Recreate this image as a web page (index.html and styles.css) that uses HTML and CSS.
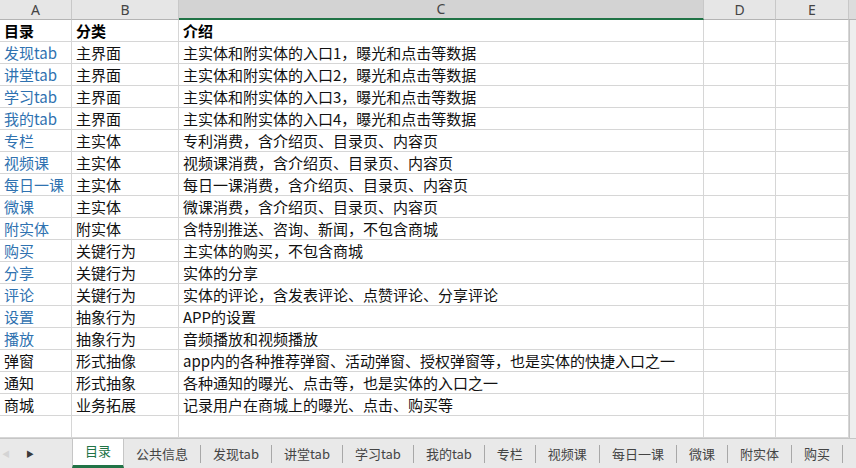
FILE: index.html
```html
<!DOCTYPE html>
<html lang="zh-CN">
<head>
<meta charset="utf-8">
<title>目录</title>
<link rel="stylesheet" href="styles.css">
</head>
<body>
<div class="app">
  <div class="sheet">
    <div class="hd">A</div><div class="hd">B</div><div class="hd sel">C</div><div class="hd">D</div><div class="hd">E</div><div class="hd edge"></div>

    <div class="c b">目录</div><div class="c b">分类</div><div class="c b">介绍</div><div class="c"></div><div class="c"></div><div class="c edge"></div>
    <div class="c link">发现tab</div><div class="c">主界面</div><div class="c">主实体和附实体的入口1，曝光和点击等数据</div><div class="c"></div><div class="c"></div><div class="c edge"></div>
    <div class="c link">讲堂tab</div><div class="c">主界面</div><div class="c">主实体和附实体的入口2，曝光和点击等数据</div><div class="c"></div><div class="c"></div><div class="c edge"></div>
    <div class="c link">学习tab</div><div class="c">主界面</div><div class="c">主实体和附实体的入口3，曝光和点击等数据</div><div class="c"></div><div class="c"></div><div class="c edge"></div>
    <div class="c link">我的tab</div><div class="c">主界面</div><div class="c">主实体和附实体的入口4，曝光和点击等数据</div><div class="c"></div><div class="c"></div><div class="c edge"></div>
    <div class="c link">专栏</div><div class="c">主实体</div><div class="c">专利消费，含介绍页、目录页、内容页</div><div class="c"></div><div class="c"></div><div class="c edge"></div>
    <div class="c link">视频课</div><div class="c">主实体</div><div class="c">视频课消费，含介绍页、目录页、内容页</div><div class="c"></div><div class="c"></div><div class="c edge"></div>
    <div class="c link">每日一课</div><div class="c">主实体</div><div class="c">每日一课消费，含介绍页、目录页、内容页</div><div class="c"></div><div class="c"></div><div class="c edge"></div>
    <div class="c link">微课</div><div class="c">主实体</div><div class="c">微课消费，含介绍页、目录页、内容页</div><div class="c"></div><div class="c"></div><div class="c edge"></div>
    <div class="c link">附实体</div><div class="c">附实体</div><div class="c">含特别推送、咨询、新闻，不包含商城</div><div class="c"></div><div class="c"></div><div class="c edge"></div>
    <div class="c link">购买</div><div class="c">关键行为</div><div class="c">主实体的购买，不包含商城</div><div class="c"></div><div class="c"></div><div class="c edge"></div>
    <div class="c link">分享</div><div class="c">关键行为</div><div class="c">实体的分享</div><div class="c"></div><div class="c"></div><div class="c edge"></div>
    <div class="c link">评论</div><div class="c">关键行为</div><div class="c">实体的评论，含发表评论、点赞评论、分享评论</div><div class="c"></div><div class="c"></div><div class="c edge"></div>
    <div class="c link">设置</div><div class="c">抽象行为</div><div class="c">APP的设置</div><div class="c"></div><div class="c"></div><div class="c edge"></div>
    <div class="c link">播放</div><div class="c">抽象行为</div><div class="c">音频播放和视频播放</div><div class="c"></div><div class="c"></div><div class="c edge"></div>
    <div class="c">弹窗</div><div class="c">形式抽像</div><div class="c">app内的各种推荐弹窗、活动弹窗、授权弹窗等，也是实体的快捷入口之一</div><div class="c"></div><div class="c"></div><div class="c edge"></div>
    <div class="c">通知</div><div class="c">形式抽象</div><div class="c">各种通知的曝光、点击等，也是实体的入口之一</div><div class="c"></div><div class="c"></div><div class="c edge"></div>
    <div class="c">商城</div><div class="c">业务拓展</div><div class="c">记录用户在商城上的曝光、点击、购买等</div><div class="c"></div><div class="c"></div><div class="c edge"></div>
    <div class="c"></div><div class="c"></div><div class="c"></div><div class="c"></div><div class="c"></div><div class="c edge"></div>
  </div>
  <div class="tabbar">
    <div class="nav"><span class="prev">&#9664;</span><span class="next">&#9654;</span></div>
    <div class="tab active">目录</div>
    <div class="tab">公共信息</div>
    <div class="tab">发现tab</div>
    <div class="tab">讲堂tab</div>
    <div class="tab">学习tab</div>
    <div class="tab">我的tab</div>
    <div class="tab">专栏</div>
    <div class="tab">视频课</div>
    <div class="tab">每日一课</div>
    <div class="tab">微课</div>
    <div class="tab">附实体</div>
    <div class="tab">购买</div>
  </div>
</div>
</body>
</html>
```

FILE: styles.css
```css
html, body {
  margin: 0;
  padding: 0;
  background: #ffffff;
}

.app {
  width: 856px;
  height: 468px;
  overflow: hidden;
  display: flex;
  flex-direction: column;
  font-family: "Noto Sans CJK SC", "Noto Sans", sans-serif;
}

.sheet {
  display: grid;
  grid-template-columns: 72px 107px 525px 72px 73px 7px;
  grid-template-rows: 20px;
  grid-auto-rows: 22px;
  flex: 0 0 auto;
}

.hd {
  box-sizing: border-box;
  background: #e6e6e6;
  border-right: 1px solid #c8c8c8;
  border-bottom: 1px solid #b4b4b4;
  color: #444444;
  font-family: "Noto Sans", "Liberation Sans", sans-serif;
  font-size: 14px;
  line-height: 19px;
  text-align: center;
}

.hd.sel {
  background: #d3d3d3;
  border-bottom: 2px solid #217346;
  line-height: 18px;
}

.hd.edge {
  background: #dcdcdc;
  border-right: none;
}

.c {
  box-sizing: border-box;
  border-right: 1px solid #d6d6d6;
  border-bottom: 1px solid #d6d6d6;
  font-size: 15px;
  line-height: 21px;
  padding-left: 4px;
  color: #111111;
  white-space: nowrap;
  overflow: visible;
}

.c.b {
  font-weight: 700;
  color: #000000;
}

.c.link {
  color: #2f72b0;
}

.c.edge {
  background: #eeeeee;
  border-right: none;
  border-bottom: none;
  border-left: 1px solid #c4c4c4;
  padding: 0;
}

.tabbar {
  flex: 1 1 auto;
  display: flex;
  align-items: center;
  background: #e9e9e9;
  border-top: 1px solid #c6c6c6;
  box-sizing: border-box;
  overflow: hidden;
}

.nav {
  width: 72px;
  flex: 0 0 72px;
  display: flex;
  align-items: center;
  font-size: 8px;
  color: #3a3a3a;
}

.nav .prev {
  color: #d4d4d4;
  width: 24px;
  margin-left: 2px;
}

.tab {
  flex: 0 0 auto;
  height: 18px;
  line-height: 18px;
  padding: 0 12px;
  border-right: 1px solid #a8a8a8;
  font-size: 13px;
  color: #444444;
  white-space: nowrap;
}

.tab.active {
  align-self: stretch;
  height: auto;
  background: #ffffff;
  color: #217346;
  border-right: 1px solid #c6c6c6;
  border-left: 1px solid #c6c6c6;
  border-bottom: 3px solid #217346;
  margin-top: -1px;
  line-height: 26px;
  padding: 0 12px;
  box-sizing: border-box;
}
```
